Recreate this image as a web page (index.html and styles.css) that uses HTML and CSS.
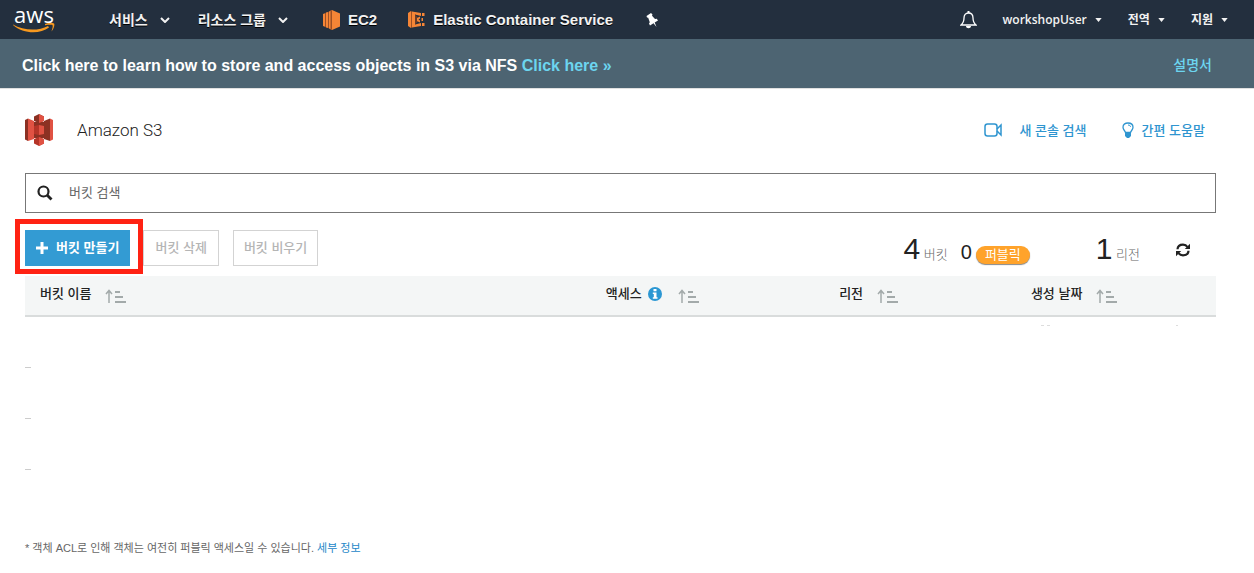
FILE: index.html
```html
<!DOCTYPE html>
<html lang="ko">
<head>
<meta charset="utf-8">
<title>Amazon S3</title>
<meta name="viewport" content="width=device-width, initial-scale=1">
<link rel="stylesheet" href="styles.css">
</head>
<body>
<svg class="defs" aria-hidden="true">
  <symbol id="chevron" viewBox="0 0 10 6"><path d="M1 1l4 4 4-4" fill="none" stroke="currentColor" stroke-width="2"/></symbol>
  <symbol id="caret" viewBox="0 0 8 5"><path d="M0 0h8L4 5z" fill="currentColor"/></symbol>
  <symbol id="sort" viewBox="0 0 21 14"><path d="M4 14V2M1 5l3-3.600 3 3.600" fill="none" stroke="currentColor" stroke-width="1.500"/><path d="M10 3h5M10 8h8M10 13h11" stroke="currentColor" stroke-width="2"/></symbol>
</svg>
<header class="nav">
  <a class="logo" href="#" aria-label="aws">
    <span class="logo-text">aws</span>
    <svg class="logo-smile" viewBox="0 0 42 10"><path d="M0 1.500c10 6 25 7 35 1.500l1 1.500C27 11.500 10 11 0 2z" fill="#f7981f"/><path d="M32 1c3-1.500 8-1.500 9-.5s0 5-2.500 8c1-3.500 1.500-5.500 1-6.200S36 1.800 32 2.200z" fill="#f7981f"/></svg>
  </a>
  <button class="nav-item services" type="button">서비스 <svg class="chevron"><use href="#chevron"/></svg></button>
  <button class="nav-item groups" type="button">리소스 그룹 <svg class="chevron"><use href="#chevron"/></svg></button>
  <a class="nav-item ec2" href="#">
    <svg width="18" height="20" viewBox="0 0 18 20"><path d="M9 0l8 3.500v13L9 20l-3-1.500v-17z" fill="#f58536"/><path d="M9 0v20l-1.500-.7V.7z" fill="#9d5025"/><path d="M3 2.500L5 2v16l-2-.5zM0 4l2-.8v13.600L0 16z" fill="#f58536"/><path d="M2 3.200l1-.7v15l-1-.7zM5 2l1-.5v17L5 18z" fill="#9d5025"/></svg>
    <span>EC2</span>
  </a>
  <a class="nav-item ecs" href="#">
    <svg width="17" height="17" viewBox="0 0 17 17"><path d="M0 2l3-2v17l-3-2z" fill="#f58536"/><path d="M3 0l1 .5v16L3 17z" fill="#9d5025"/><path d="M4 .5L13 2v3L7 3.500v10l6-1.500v3l-9 1.500z" fill="#f58536"/><path d="M7 3.500l3 3v4l-3 3z" fill="#6b3d29"/><path d="M9 7l3-1.500v2L10.500 8.500 12 9.500v2L9 10zM14 2h2.500v3H14zM13.500 7H15v3h-1.500zM14 12h2.500v3H14z" fill="#f58536"/></svg>
    <span>Elastic Container Service</span>
  </a>
  <button class="pin" type="button" aria-label="고정"><svg width="14" height="14" viewBox="0 0 14 14"><path d="M1.500 3L6 0l1.500 1.500-.5 1.300 3 3.200 1.800-.2 1.200 1.600-3.300 2.200L11.500 14 8.500 10.300 5 12.500 4 10.500l.8-1.200-1.600-4.500L2 4.500z" fill="#fff"/></svg></button>
  <div class="account">
    <button class="bell" type="button" aria-label="알림"><svg width="17" height="18" viewBox="0 0 17 18"><path d="M1 14c2.500-2 3-3.500 3-7 0-3 1.500-5 4.500-5S13 4 13 7c0 3.500.5 5 3 7z" fill="none" stroke="#fff" stroke-width="1.300"/><path d="M7.500 0h2v2h-2zM6 15h5c0 3-5 3-5 0z" fill="#fff"/></svg></button>
    <button class="nav-small" type="button">workshopUser <svg class="caret"><use href="#caret"/></svg></button>
    <button class="nav-small" type="button">전역 <svg class="caret"><use href="#caret"/></svg></button>
    <button class="nav-small" type="button">지원 <svg class="caret"><use href="#caret"/></svg></button>
  </div>
</header>
<div class="banner">
  <p class="banner-text">Click here to learn how to store and access objects in S3 via NFS <a href="#">Click here »</a></p>
  <a class="docs" href="#">설명서</a>
</div>
<main class="content">
  <div class="title-row">
    <svg class="s3" width="28" height="32" viewBox="0 0 28 32"><path d="M0 6l3-1.500V27l-3-1.500z" fill="#8c3123"/><path d="M3 4.500L9 7v18l-6 2z" fill="#e05243"/><path d="M9 8h10v16H9z" fill="#8c3123"/><path d="M25 4.500L19 7v18l6 2z" fill="#8c3123"/><path d="M25 4.500L28 6v19.500L25 27z" fill="#e05243"/><path d="M14 0l5 2.500V7l-5 2-5-2V2.500z" fill="#8c3123"/><path d="M14 0l5 2.500V7l-5 2z" fill="#e05243"/><path d="M9 12l5-1v10l-5-1z" fill="#b53528"/><path d="M14 11l5 1v8l-5 1z" fill="#e05243"/><path d="M9 25l5-2 5 2v4.500L14 32l-5-2.500z" fill="#b53528"/><path d="M14 23l5 2v4.500L14 32z" fill="#e05243"/></svg>
    <h1 class="title">Amazon S3</h1>
    <a class="help-link" href="#"><svg width="18" height="14" viewBox="0 0 18 14"><rect x="1" y="1" width="12" height="12" rx="2.500" fill="none" stroke="currentColor" stroke-width="1.500"/><path d="M13 6l4-4v10l-4-4" fill="none" stroke="currentColor" stroke-width="1.500"/></svg><span>새 콘솔 검색</span></a>
    <a class="help-link tips" href="#"><svg width="12" height="16" viewBox="0 0 12 16"><path d="M3.500 10.500C3 8.500 1 8 1 5.300 1 2.500 3 1 6 1s5 1.500 5 4.300c0 2.700-2 3.200-2.500 5.200z" fill="none" stroke="currentColor" stroke-width="1.300"/><path d="M3 10h6v4l-2 2H5l-2-2z" fill="currentColor"/><path d="M6 3c2 0 2.500 1 2.500 2" fill="none" stroke="currentColor"/></svg><span>간편 도움말</span></a>
  </div>
  <label class="search">
    <svg width="16" height="16" viewBox="0 0 16 16"><circle cx="6.500" cy="6.500" r="5" fill="none" stroke="#222" stroke-width="2.200"/><path d="M10 10l4.500 4.500" stroke="#222" stroke-width="2.800"/></svg>
    <input type="search" placeholder="버킷 검색" aria-label="버킷 검색">
  </label>
  <div class="toolbar">
    <div class="highlight"><button class="btn primary" type="button"><svg width="12" height="12" viewBox="0 0 12 12"><path d="M6 0v12M0 6h12" stroke="#fff" stroke-width="3"/></svg>버킷 만들기</button></div>
    <button class="btn remove" type="button" disabled>버킷 삭제</button>
    <button class="btn" type="button" disabled>버킷 비우기</button>
    <div class="stats">
      <p class="stat"><span class="big">4</span> 버킷</p>
      <p class="stat public"><span class="mid">0</span><span class="badge">퍼블릭</span></p>
      <p class="stat regions"><span class="big">1</span> 리전</p>
      <button class="refresh" type="button" aria-label="새로 고침"><svg width="14" height="14" viewBox="0 0 14 14"><path d="M1.500 6.300C1.700 3 4 1.700 7 1.700c2 0 3.500.8 4.500 2.300M12.500 7.700C12.300 11 10 12.300 7 12.300c-2 0-3.500-.8-4.500-2.300" fill="none" stroke="#222" stroke-width="2.200"/><path d="M14 .8V6H8.800zM0 13.200V8h5.200z" fill="#222"/></svg></button>
    </div>
  </div>
  <table class="buckets">
    <colgroup><col class="col-name"><col class="col-access"><col class="col-region"><col class="col-date"></colgroup>
    <thead>
      <tr>
        <th><div class="head">버킷 이름<svg class="sort"><use href="#sort"/></svg></div></th>
        <th><div class="head">액세스<svg class="info" viewBox="0 0 14 14"><circle cx="7" cy="7" r="7" fill="#2b97d3"/><path d="M5.500 2h3v2.200h-3zM4.800 5.500h3.700v4.700h1v1.500H4.800v-1.500h1V7h-1z" fill="#fff"/></svg><svg class="sort"><use href="#sort"/></svg></div></th>
        <th><div class="head">리전<svg class="sort"><use href="#sort"/></svg></div></th>
        <th><div class="head">생성 날짜<svg class="sort"><use href="#sort"/></svg></div></th>
      </tr>
    </thead>
    <tbody>
      <tr><td><div class="rule"></div></td><td></td><td></td><td class="date"><svg class="traces" width="140" height="1" viewBox="0 0 140 1"><path d="M0 0h3v1H0zM6 0h3v1H6zM135 0h2v1h-2z" fill="#ddd"/></svg></td></tr>
      <tr><td><div class="rule"></div></td><td></td><td></td><td></td></tr>
      <tr><td><div class="rule"></div></td><td></td><td></td><td></td></tr>
    </tbody>
  </table>
  <p class="note">* 객체 ACL로 인해 객체는 여전히 퍼블릭 액세스일 수 있습니다. <a href="#">세부 정보</a></p>
</main>
</body>
</html>
```
FILE: styles.css
```css
* { box-sizing: border-box; }
body {
  margin: 0;
  background: #fff;
  color: #333;
  font: 13px/20px "Liberation Sans", "Noto Sans CJK KR", sans-serif;
}
p, h1 { margin: 0; }
a { color: #2487c8; text-decoration: none; }
button { border: 0; padding: 0; background: none; color: inherit; font: inherit; white-space: nowrap; }
svg { flex: none; }
.defs { display: none; }

.nav {
  display: flex;
  align-items: center;
  height: 39px;
  padding: 0 26px 0 13px;
  background: #232f3e;
  color: #f2f2f2;
}
.logo { display: flex; flex-direction: column; width: 42px; padding-bottom: 2px; color: #fff; }
.logo-text { font: 500 22px/18px "Open Sans", sans-serif; text-align: center; }
.logo-smile { width: 42px; height: 10px; }
.nav-item {
  display: flex;
  align-items: center;
  color: #f2f2f2;
  font-size: 15px;
  font-weight: bold;
  white-space: nowrap;
  text-shadow: 0 1px 0 #000;
}
.chevron { width: 10px; height: 6px; margin-left: 12px; }
.services { margin-left: 54px; font-size: 14px; }
.groups { margin-left: 28px; font-size: 14px; }
.ec2 { gap: 7px; margin-left: 35px; }
.ecs { gap: 8px; margin-left: 31px; }
.pin { display: flex; margin-left: 32px; }
.account { display: flex; align-items: center; gap: 26px; margin-left: auto; }
.bell { display: flex; }
.nav-small {
  display: flex;
  align-items: center;
  gap: 8px;
  font: 600 12px/20px "Open Sans", "Noto Sans CJK KR", sans-serif;
}
.caret { width: 7px; height: 4px; }

.banner {
  display: flex;
  align-items: center;
  justify-content: space-between;
  height: 50px;
  padding: 2px 42px 0 22px;
  border-bottom: 1px solid #e0e0e0;
  background: #4d6472;
  color: #fff;
}
.banner-text { padding-top: 2px; font-size: 16px; font-weight: bold; }
.banner a { color: #6cd5ef; }
.docs { font-size: 14px; font-weight: 500; }

.content { padding: 0 38px 0 25px; }
.title-row { display: flex; align-items: center; height: 84px; padding-bottom: 2px; }
.title { margin: 0 auto 0 24px; color: #222; font: 300 17px/24px Roboto, sans-serif; }
.help-link { display: flex; align-items: center; gap: 17px; margin-right: 35px; color: #2f95d0; font: 500 13px/20px "Noto Sans CJK KR", sans-serif; }
.tips { gap: 8px; margin-right: 11px; }

.search { display: flex; align-items: center; height: 40px; padding: 0 11px; border: 1px solid #777; }
.search input {
  flex: 1;
  margin-left: 16px;
  padding: 0;
  border: 0;
  outline: 0;
  color: #333;
  font: inherit;
}
.search input::placeholder { color: #666; opacity: 1; }

.toolbar { display: flex; align-items: center; height: 63px; padding-top: 7px; }
.highlight {
  margin: 0 0 3px -10px;
  padding: 6px 8px 3px 5px;
  border: 5px solid #ff2213;
}
.btn {
  display: flex;
  align-items: center;
  justify-content: center;
  height: 36px;
  padding: 0 10px;
  border: 1px solid #d3d3d3;
  background: #fff;
  color: #b5b5b5;
  font-weight: 500;
}
.btn.primary { gap: 8px; border-color: #339bd3; background: #339bd3; color: #fff; font-weight: bold; }
.remove { margin-right: 14px; padding: 0 11px; }
.stats { display: flex; align-items: baseline; margin-left: auto; padding-top: 3px; }
.stat { color: #666; font-size: 13px; font-weight: 300; white-space: nowrap; }
.big { color: #222; font: 30px/30px "Liberation Sans", sans-serif; }
.mid { color: #222; font: 20px/24px "Liberation Sans", sans-serif; }
.public { margin-left: 13px; }
.badge {
  display: inline-block;
  margin-left: 4px;
  padding: 0 9px;
  border-radius: 9px;
  background: #ffa32b;
  box-shadow: 0 1px 1px #888;
  color: #fff;
  font-weight: 400;
  line-height: 18px;
}
.regions { margin-left: 66px; }
.refresh { align-self: center; display: flex; margin: 0 26px 0 36px; }

.buckets { width: 100%; border-collapse: separate; border-spacing: 0; table-layout: fixed; }
.col-name { width: 47.5%; }
.col-access { width: 19.6%; }
.col-region { width: 16.1%; }
.buckets th {
  height: 41px;
  padding: 0 15px 4px;
  border-bottom: 2px solid #d9dcdc;
  background: #f4f6f6;
  color: #222;
  font-weight: 500;
  text-align: left;
}
.head { display: flex; align-items: center; }
.sort { width: 21px; height: 14px; margin: 4px 0 0 14px; color: #a3aaaa; }
.info { width: 14px; height: 14px; margin: 0 2px 0 6px; }
.buckets td { height: 51px; padding: 0; vertical-align: bottom; }
.rule { width: 6px; height: 1px; background: #ccc; }
.buckets .date { padding: 8px 0 0 25px; vertical-align: top; }
.traces { display: block; }

.note { margin-top: 68px; color: #666; font-size: 11px; }
```
